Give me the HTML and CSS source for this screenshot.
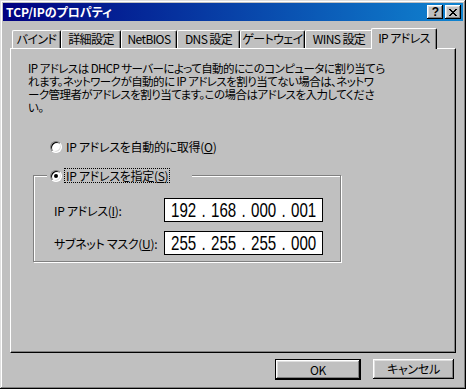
FILE: index.html
```html
<!DOCTYPE html>
<html lang="ja">
<head>
<meta charset="utf-8">
<title>TCP/IPのプロパティ</title>
<link rel="stylesheet" href="styles.css">
</head>
<body>
<div class="window">
  <div class="titlebar">
    <span class="title">TCP/IPのプロパティ</span>
    <div class="tb-buttons">
      <div class="tb-btn help">?</div>
      <div class="tb-btn close">
        <svg width="8" height="7" viewBox="0 0 8 7" shape-rendering="crispEdges">
          <path d="M0 0h2v1h-2zM6 0h2v1h-2zM1 1h2v1h-2zM5 1h2v1h-2zM2 2h4v1h-4zM3 3h2v1h-2zM2 4h4v1h-4zM1 5h2v1h-2zM5 5h2v1h-2zM0 6h2v1h-2zM6 6h2v1h-2z" fill="#000"/>
        </svg>
      </div>
    </div>
  </div>
  <div class="client">
    <div class="tabs">
      <div class="tab t1">バインド</div>
      <div class="tab t2">詳細設定</div>
      <div class="tab t3">NetBIOS</div>
      <div class="tab t4">DNS 設定</div>
      <div class="tab t5">ゲートウェイ</div>
      <div class="tab t6">WINS 設定</div>
      <div class="tab t7 active">IP アドレス</div>
    </div>
    <div class="panel">
      <p class="desc">IP アドレスは DHCP サーバーによって自動的にこのコンピュータに割り当てら<br>れます。ネットワークが自動的に IP アドレスを割り当てない場合は、ネットワ<br>ーク管理者がアドレスを割り当てます。この場合はアドレスを入力してくださ<br>い。</p>
      <div class="radio-row auto">
        <span class="radio"></span>
        <span class="label">IP アドレスを自動的に取得(<u>O</u>)</span>
      </div>
      <div class="group">
        <div class="legend">
          <span class="radio checked"></span>
          <span class="label focus">IP アドレスを指定(<u>S</u>)</span>
        </div>
        <div class="field-row">
          <span class="field-label">IP アドレス(<u>I</u>):</span>
          <div class="ipbox">
            <span class="oct">192</span><span class="dot">.</span><span class="oct">168</span><span class="dot">.</span><span class="oct">000</span><span class="dot">.</span><span class="oct">001</span>
          </div>
        </div>
        <div class="field-row">
          <span class="field-label">サブネット マスク(<u>U</u>):</span>
          <div class="ipbox">
            <span class="oct">255</span><span class="dot">.</span><span class="oct">255</span><span class="dot">.</span><span class="oct">255</span><span class="dot">.</span><span class="oct">000</span>
          </div>
        </div>
      </div>
    </div>
    <div class="buttons">
      <div class="btn default"><span>OK</span></div>
      <div class="btn"><span>キャンセル</span></div>
    </div>
  </div>
</div>
</body>
</html>
```

FILE: styles.css
```css
html, body {
  margin: 0;
  padding: 0;
  background: #c0c0c0;
}

body {
  font-family: "Noto Sans CJK JP", "Liberation Sans", sans-serif;
  font-size: 12px;
  font-feature-settings: "palt";
  letter-spacing: -0.3px;
  color: #000;
}

.window {
  width: 466px;
  height: 389px;
  box-sizing: border-box;
  padding: 3px;
  background: #c0c0c0;
  box-shadow: inset -1px -1px #000, inset 1px 1px #dfdfdf, inset -2px -2px #808080, inset 2px 2px #fff;
  display: flex;
  flex-direction: column;
}

.titlebar {
  height: 18px;
  background: linear-gradient(to right, #000080, #1084d0);
  display: flex;
  align-items: center;
  justify-content: space-between;
  padding: 0 2px 0 3px;
}

.title {
  color: #fff;
  font-weight: bold;
  font-size: 12px;
  line-height: 18px;
  letter-spacing: 0;
}

.tb-buttons {
  display: flex;
  gap: 2px;
}

.tb-btn {
  width: 16px;
  height: 14px;
  box-sizing: border-box;
  background: #c0c0c0;
  box-shadow: inset -1px -1px #000, inset 1px 1px #fff, inset -2px -2px #808080, inset 2px 2px #dfdfdf;
  display: flex;
  align-items: center;
  justify-content: center;
}

.tb-btn.help {
  font-family: "Liberation Sans", sans-serif;
  font-weight: bold;
  font-size: 12px;
  line-height: 14px;
  letter-spacing: 0;
  padding-left: 1px;
}

.tb-btn.close svg {
  display: block;
}

.client {
  padding: 7px 7px 0 7px;
  display: flex;
  flex-direction: column;
}

.tabs {
  display: flex;
  align-items: flex-end;
  height: 20px;
  padding-left: 2px;
  position: relative;
  z-index: 2;
}

.tab {
  height: 18px;
  box-sizing: border-box;
  border-left: 1px solid #fff;
  border-top: 1px solid #fff;
  border-right: 1px solid #000;
  border-top-left-radius: 2px;
  border-top-right-radius: 2px;
  box-shadow: inset -1px 0 #808080;
  background: #c0c0c0;
  display: flex;
  align-items: center;
  justify-content: center;
  line-height: 14px;
  white-space: nowrap;
  padding-bottom: 1px;
  letter-spacing: -0.6px;
}

.t1 { width: 49px; }
.t2 { width: 60px; }
.t3 { width: 56px; }
.t4 { width: 63px; }
.t5 { width: 65px; }
.t6 { width: 68px; }
.t7 { width: 66px; }

.tab.active {
  height: 21px;
  margin: 0 -2px -1px -2px;
  padding-bottom: 3px;
  position: relative;
  z-index: 3;
}

.panel {
  height: 305px;
  box-sizing: border-box;
  border: 1px solid;
  border-color: #fff #000 #000 #fff;
  box-shadow: inset -1px -1px #808080;
  position: relative;
  z-index: 1;
}

.desc {
  margin: 13px 0 0 17px;
  line-height: 13px;
  white-space: nowrap;
  font-size: 11.5px;
  letter-spacing: -0.55px;
}

.radio-row {
  display: flex;
  align-items: center;
  height: 13px;
}

.radio-row.auto {
  margin: 26px 0 0 39px;
}

.radio {
  width: 12px;
  height: 12px;
  box-sizing: border-box;
  border-radius: 50%;
  background: #fff;
  border: 1px solid;
  border-color: #808080 #fff #fff #808080;
  box-shadow: inset 1px 1px #000, inset -1px -1px #dfdfdf;
  position: relative;
  flex: none;
}

.radio.checked::after {
  content: "";
  position: absolute;
  left: 3px;
  top: 3px;
  width: 4px;
  height: 4px;
  border-radius: 50%;
  background: #000;
}

.label {
  margin-left: 4px;
  line-height: 13px;
  white-space: nowrap;
}

.label.focus {
  outline: 1px dotted #000;
  outline-offset: 0;
  padding: 0 1px;
  margin-left: 3px;
}

.group {
  position: relative;
  margin: 22px 0 0 22px;
  width: 308px;
  height: 87px;
  box-sizing: border-box;
  border: 1px solid #808080;
  box-shadow: inset 1px 1px #fff, 1px 1px #fff;
  padding: 22px 0 0 20px;
  display: flex;
  flex-direction: column;
  gap: 9px;
}

.legend {
  position: absolute;
  left: 13px;
  top: -8px;
  width: 145px;
  height: 15px;
  box-sizing: border-box;
  padding-left: 3px;
  background: #c0c0c0;
  display: flex;
  align-items: center;
}

.field-row {
  display: flex;
  align-items: center;
  height: 24px;
}

.field-label {
  width: 110px;
  white-space: nowrap;
}

.ipbox {
  width: 159px;
  height: 24px;
  box-sizing: border-box;
  border: 1px solid #000;
  background: #fff;
  display: flex;
  align-items: center;
  padding-left: 6px;
  font-family: "Liberation Sans", sans-serif;
  font-size: 21px;
  line-height: 22px;
  letter-spacing: 0;
}

.oct {
  display: inline-block;
  width: 25px;
  white-space: nowrap;
  transform: scaleX(0.72);
  transform-origin: left center;
}

.oct, .dot {
  height: 22px;
}

.dot {
  display: inline-block;
  width: 15px;
  text-align: center;
  transform: scaleX(0.72);
}

.buttons {
  display: flex;
  justify-content: flex-end;
  gap: 12px;
  margin-top: 6px;
  padding-right: 2px;
}

.btn {
  width: 81px;
  height: 20px;
  box-sizing: border-box;
  background: #c0c0c0;
  box-shadow: inset -1px -1px #000, inset 1px 1px #fff, inset -2px -2px #808080, inset 2px 2px #dfdfdf;
  display: flex;
  align-items: center;
  justify-content: center;
  line-height: 14px;
}

.btn.default {
  width: 86px;
  height: 21px;
  border: 1px solid #000;
}
```
